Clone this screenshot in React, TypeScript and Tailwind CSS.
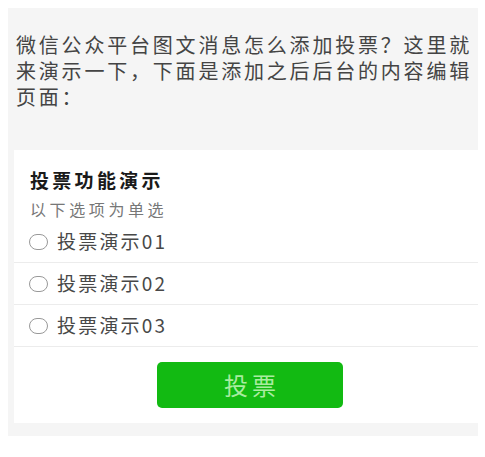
const options = ["投票演示01", "投票演示02", "投票演示03"];

export default function App() {
  return (
    <div
      className="w-[485px] h-[457px] bg-white pt-2 pl-2"
      style={{ fontFamily: '"Noto Sans CJK SC", "Noto Sans", sans-serif' }}
    >
      <div className="w-[470px] h-[428px] bg-[#f5f5f5] pt-6">
        {/* intro text */}
        <p className="pl-2 text-[20px] leading-[26px] tracking-[2.8px] text-[#444]">
          微信公众平台图文消息怎么添加投票？这里就来演示一下，下面是添加之后后台的内容编辑页面：
        </p>

        {/* vote card */}
        <div className="mt-10 ml-1.5 h-[273px] bg-white">
          <div className="pl-4 pt-[18px]">
            <h2 className="text-[19px] leading-6 font-bold tracking-[3.3px] text-[#1a1a1a]">
              投票功能演示
            </h2>
            <p className="mt-[7px] text-[16px] leading-5 tracking-[3.6px] text-[#777]">
              以下选项为单选
            </p>
          </div>
          <div className="mt-0.5">
            {options.map((opt) => (
              <div
                key={opt}
                className="flex h-[42px] items-center border-b border-[#ececec] pl-[15px]"
              >
                <span className="h-[16px] w-[19px] rounded-full border-[1.5px] border-[#999]" />
                <span className="ml-[9px] text-[19px] tracking-[2.2px] text-[#484848]">
                  {opt}
                </span>
              </div>
            ))}
          </div>
          <button className="mt-[15px] ml-[143px] flex h-[46px] w-[186px] items-center justify-center rounded-[5px] bg-[#12ba12] pl-[4px] text-[24px] tracking-[4px] text-[#a8eca0]">
            投票
          </button>
        </div>
      </div>
    </div>
  );
}
